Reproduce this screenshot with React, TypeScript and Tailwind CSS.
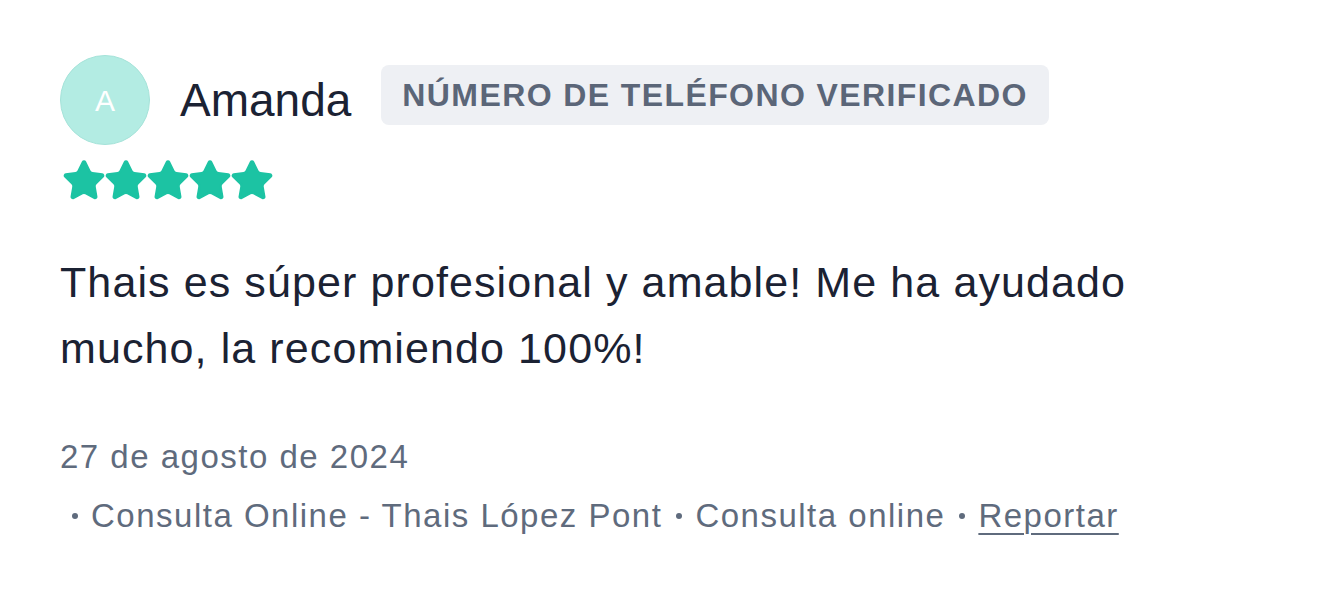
import React from 'react';

const Star = () => (
    <svg viewBox="1 1.2 22 21" className="h-[40px] w-[42px]" fill="#1cc3a3">
        <path
            d="M11.525 2.295a.53.53 0 0 1 .95 0l2.31 4.679a2.123 2.123 0 0 0 1.595 1.16l5.166.756a.53.53 0 0 1 .294.904l-3.736 3.638a2.123 2.123 0 0 0-.611 1.878l.882 5.14a.53.53 0 0 1-.771.56l-4.618-2.428a2.122 2.122 0 0 0-1.973 0L6.396 21.01a.53.53 0 0 1-.77-.56l.881-5.139a2.122 2.122 0 0 0-.611-1.879L2.16 9.795a.53.53 0 0 1 .294-.906l5.165-.755a2.122 2.122 0 0 0 1.597-1.16z"
            stroke="#1cc3a3"
            strokeWidth="1.4"
            strokeLinejoin="round"
        />
    </svg>
);

const Dot: React.FC<{ first?: boolean }> = ({ first }) => (
    <span className={`mr-[13px] inline-block h-[6px] w-[6px] shrink-0 rounded-full bg-[#5f6b7d] ${first ? 'ml-[12px]' : 'ml-[14px]'}`} />
);

const App: React.FC = () => {
    return (
        <div className="min-h-screen bg-white pl-[60px] pt-[55px] font-['Liberation_Sans',Arial,sans-serif]">
            {/* Header */}
            <div className="flex items-center">
                <div className="flex h-[90px] w-[90px] items-center justify-center rounded-full border border-[#a5e3d9] bg-[#b3ece3] text-[30px] text-white">
                    A
                </div>
                <div className="ml-[30px] text-[46px] leading-none text-[#1b2233]">Amanda</div>
                <div className="mb-[10px] ml-[30px] rounded-[8px] bg-[#eef0f4] px-[21px] py-[12px] text-[32px] font-bold uppercase leading-[36px] tracking-[1.4px] text-[#5b6678]">
                    Número de teléfono verificado
                </div>
            </div>

            {/* Stars */}
            <div className="ml-[3px] mt-[15px] flex">
                <Star />
                <Star />
                <Star />
                <Star />
                <Star />
            </div>

            {/* Body */}
            <p className="mt-[49px] max-w-[1100px] text-[43px] leading-[66px] tracking-[1.1px] text-[#1b2233]">
                Thais es súper profesional y amable! Me ha ayudado mucho, la recomiendo 100%!
            </p>

            <div className="mt-[56px] text-[33px] leading-[40px] tracking-[1.5px] text-[#5f6b7d]">27 de agosto de 2024</div>
            <div className="mt-[19px] flex items-center text-[33px] leading-[40px] tracking-[1.5px] text-[#5f6b7d]">
                <Dot first />
                <span>Consulta Online - Thais López Pont</span>
                <Dot />
                <span>Consulta online</span>
                <Dot />
                <a href="#" className="underline decoration-2 underline-offset-[6px]">Reportar</a>
            </div>
        </div>
    );
};

export default App;
